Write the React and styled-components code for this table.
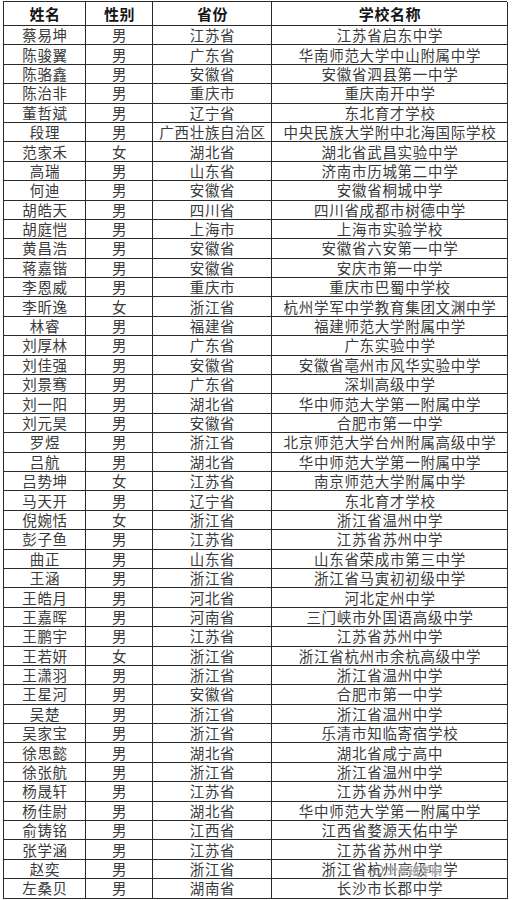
import React from "react";
import styled, { createGlobalStyle } from "styled-components";

const Global = createGlobalStyle`
  html, body { margin: 0; padding: 0; background: #fff; }
  body { font-family: "Noto Sans CJK SC", "Noto Sans", sans-serif; }
`;

const Page = styled.div`
  position: relative;
  width: 512px;
  height: 900px;
  padding: 1px 0 0 3px;
  box-sizing: border-box;
  overflow: hidden;
  background: #fff;
`;

const Grid = styled.div`
  display: grid;
  grid-template-columns: 82px 67px 119px 236px;
  grid-template-rows: 24px;
  grid-auto-rows: 19.4px;
  border-top: 1px solid #2a2a2a;
  border-left: 1px solid #2a2a2a;
  width: 504px;
  box-sizing: border-box;
`;

const Cell = styled.div`
  box-sizing: border-box;
  border-right: 1px solid #2a2a2a;
  border-bottom: 1px solid #2a2a2a;
  display: flex;
  align-items: center;
  justify-content: center;
  white-space: nowrap;
  font-size: ${(p) => (p.$head ? "15px" : "14.5px")};
  font-weight: ${(p) => (p.$head ? 700 : 400)};
  letter-spacing: ${(p) => (p.$head ? "0.6px" : "0.7px")};
  color: ${(p) => (p.$head ? "#151515" : "#3a3a3a")};
  line-height: 16px;
  padding: 0 0 0 1px;
  min-height: 0;
`;

const Watermark = styled.div`
  position: absolute;
  left: 372px;
  top: 864px;
  display: flex;
  align-items: center;
  gap: 3px;
  font-size: 11px;
  line-height: 12px;
  color: rgba(110, 110, 110, 0.75);
  text-shadow: 0 0 1px #fff, 0 0 2px #fff;
  letter-spacing: 0;
  pointer-events: none;
`;

const rows = [
  ["蔡易坤", "男", "江苏省", "江苏省启东中学"],
  ["陈骏翼", "男", "广东省", "华南师范大学中山附属中学"],
  ["陈骆鑫", "男", "安徽省", "安徽省泗县第一中学"],
  ["陈治非", "男", "重庆市", "重庆南开中学"],
  ["董哲斌", "男", "辽宁省", "东北育才学校"],
  ["段理", "男", "广西壮族自治区", "中央民族大学附中北海国际学校"],
  ["范家禾", "女", "湖北省", "湖北省武昌实验中学"],
  ["高瑞", "男", "山东省", "济南市历城第二中学"],
  ["何迪", "男", "安徽省", "安徽省桐城中学"],
  ["胡皓天", "男", "四川省", "四川省成都市树德中学"],
  ["胡庭恺", "男", "上海市", "上海市实验学校"],
  ["黄昌浩", "男", "安徽省", "安徽省六安第一中学"],
  ["蒋嘉锴", "男", "安徽省", "安庆市第一中学"],
  ["李恩威", "男", "重庆市", "重庆市巴蜀中学校"],
  ["李昕逸", "女", "浙江省", "杭州学军中学教育集团文渊中学"],
  ["林睿", "男", "福建省", "福建师范大学附属中学"],
  ["刘厚林", "男", "广东省", "广东实验中学"],
  ["刘佳强", "男", "安徽省", "安徽省亳州市风华实验中学"],
  ["刘景骞", "男", "广东省", "深圳高级中学"],
  ["刘一阳", "男", "湖北省", "华中师范大学第一附属中学"],
  ["刘元昊", "男", "安徽省", "合肥市第一中学"],
  ["罗煜", "男", "浙江省", "北京师范大学台州附属高级中学"],
  ["吕航", "男", "湖北省", "华中师范大学第一附属中学"],
  ["吕势坤", "女", "江苏省", "南京师范大学附属中学"],
  ["马天开", "男", "辽宁省", "东北育才学校"],
  ["倪婉恬", "女", "浙江省", "浙江省温州中学"],
  ["彭子鱼", "男", "江苏省", "江苏省苏州中学"],
  ["曲正", "男", "山东省", "山东省荣成市第三中学"],
  ["王涵", "男", "浙江省", "浙江省马寅初初级中学"],
  ["王皓月", "男", "河北省", "河北定州中学"],
  ["王嘉晖", "男", "河南省", "三门峡市外国语高级中学"],
  ["王鹏宇", "男", "江苏省", "江苏省苏州中学"],
  ["王若妍", "女", "浙江省", "浙江省杭州市余杭高级中学"],
  ["王潇羽", "男", "浙江省", "浙江省温州中学"],
  ["王星河", "男", "安徽省", "合肥市第一中学"],
  ["吴楚", "男", "浙江省", "浙江省温州中学"],
  ["吴家宝", "男", "浙江省", "乐清市知临寄宿学校"],
  ["徐思懿", "男", "湖北省", "湖北省咸宁高中"],
  ["徐张航", "男", "浙江省", "浙江省温州中学"],
  ["杨晟轩", "男", "江苏省", "江苏省苏州中学"],
  ["杨佳尉", "男", "湖北省", "华中师范大学第一附属中学"],
  ["俞铸铭", "男", "江西省", "江西省婺源天佑中学"],
  ["张学涵", "男", "江苏省", "江苏省苏州中学"],
  ["赵奕", "男", "浙江省", "浙江省杭州高级中学"],
  ["左桑贝", "男", "湖南省", "长沙市长郡中学"],
];

const head = ["姓名", "性别", "省份", "学校名称"];

export default function App() {
  return (
    <>
      <Global />
      <Page>
        <Grid>
          {head.map((h) => (
            <Cell key={h} $head>
              {h}
            </Cell>
          ))}
          {rows.map((r, i) =>
            r.map((c, j) => <Cell key={i + "-" + j}>{c}</Cell>)
          )}
        </Grid>
        <Watermark>
          <svg width="12" height="12" viewBox="0 0 12 12">
            <circle cx="6" cy="6" r="5" fill="none" stroke="rgba(110,110,110,0.7)" strokeWidth="1.2" />
            <path d="M3.5 6h5M6 3.5v5" stroke="rgba(110,110,110,0.7)" strokeWidth="1.2" />
          </svg>
          <span>少年班学院</span>
        </Watermark>
      </Page>
    </>
  );
}
